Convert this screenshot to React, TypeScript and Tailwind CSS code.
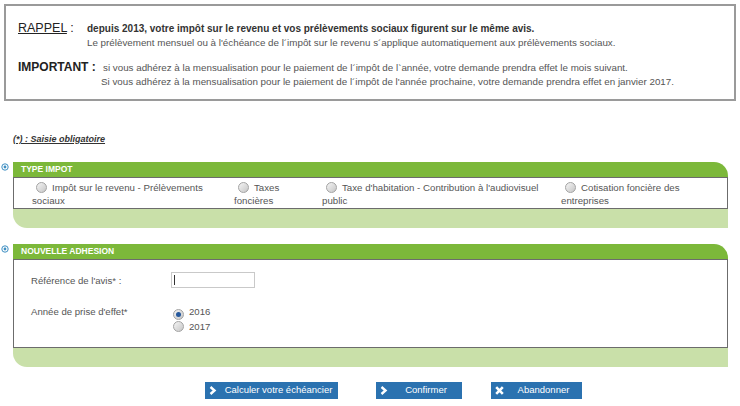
import type { ReactNode } from "react";

function Bullet() {
  return (
    <svg width="8" height="8" viewBox="0 0 8 8" className="block">
      <circle cx="4" cy="4" r="3.2" fill="#fff" stroke="#3f8fc2" strokeWidth="1" />
      <circle cx="4" cy="4" r="1.4" fill="#3f8fc2" />
    </svg>
  );
}

function Radio({ checked = false }: { checked?: boolean }) {
  return (
    <span className="inline-flex h-[11px] w-[11px] items-center justify-center rounded-full border border-[#a3a3a3] bg-linear-to-br from-[#f5f5f5] to-[#c6c6c6] align-[-2px]">
      {checked && <span className="h-[5px] w-[5px] rounded-full bg-[#25589c]" />}
    </span>
  );
}

function Panel({ title, children }: { title: string; children: ReactNode }) {
  return (
    <div className="flex">
      <div className="w-[13px] pl-[1px] pt-[1px]">
        <Bullet />
      </div>
      <div className="w-[715px]">
        <div className="h-[15px] rounded-tr-[14px] bg-[#7cb83a] pl-[8px] text-[8.5px] font-bold leading-[15px] text-white">
          {title}
        </div>
        <div className="border border-[#6c6c6c] bg-white">{children}</div>
        <div className="h-[19px] rounded-bl-[14px] bg-[#c9e0a9]" />
      </div>
    </div>
  );
}

function Chevron() {
  return (
    <svg width="8" height="9" viewBox="0 0 8 9" className="block">
      <path d="M1.5 1 L5.5 4.5 L1.5 8" fill="none" stroke="#fff" strokeWidth="2.4" strokeLinejoin="miter" />
    </svg>
  );
}

function Cross() {
  return (
    <svg width="9" height="9" viewBox="0 0 9 9" className="block">
      <path d="M1.2 1.2 L7.8 7.8 M7.8 1.2 L1.2 7.8" fill="none" stroke="#fff" strokeWidth="2.6" />
    </svg>
  );
}

function Btn({ label, icon, width }: { label: string; icon: ReactNode; width: string }) {
  return (
    <div className={`flex h-[17px] items-center bg-[#2b72b0] pl-[4px] text-[9.5px] text-white ${width}`}>
      <span className="w-[10px]">{icon}</span>
      <span className="flex-1 text-center">{label}</span>
    </div>
  );
}

const types = [
  "Impôt sur le revenu - Prélèvements sociaux",
  "Taxes foncières",
  "Taxe d'habitation - Contribution à l'audiovisuel public",
  "Cotisation foncière des entreprises",
];

export default function App() {
  return (
    <div className="h-[406px] w-[740px] overflow-hidden bg-white pt-[4px] font-['Liberation_Sans',Arial,sans-serif] text-[#555]">
      <div className="mx-[4px] h-[97px] border-2 border-[#9a9a9a] pl-[12px] pt-[15px]">
        <div className="flex items-baseline leading-[14px]">
          <span className="w-[69px] shrink-0 text-[12.5px] text-[#222]">
            <span className="underline">RAPPEL</span> :
          </span>
          <div className="text-[9.8px]">
            <p className="text-[10px] font-bold text-[#333]">
              depuis 2013, votre impôt sur le revenu et vos prélèvements sociaux figurent sur le même avis.
            </p>
            <p>
              Le prélèvement mensuel ou à l'échéance de l´impôt sur le revenu s´applique automatiquement aux
              prélèvements sociaux.
            </p>
          </div>
        </div>
        <div className="mt-[10px] flex items-baseline leading-[14px]">
          <span className="w-[85px] shrink-0 text-[12px] font-bold text-[#222]">IMPORTANT :</span>
          <div className="text-[9.8px]">
            <p>
              si vous adhérez à la mensualisation pour le paiement de l´impôt de l`année, votre demande prendra
              effet le mois suivant.
            </p>
            <p className="-ml-[2px]">
              Si vous adhérez à la mensualisation pour le paiement de l´impôt de l'année prochaine, votre demande
              prendra effet en janvier 2017.
            </p>
          </div>
        </div>
      </div>

      <p className="mt-[32px] pl-[13px] text-[9px] font-bold italic leading-[12px] text-[#333] underline">
        (*) : Saisie obligatoire
      </p>

      <div className="mt-[17px]">
        <Panel title="TYPE IMPOT">
          <div className="grid grid-cols-[202px_88px_239px_160px] pb-[1px] pl-[18px] pt-[3px] text-[9.7px] leading-[13px]">
            {types.map((t) => (
              <div key={t} className="pr-[8px]">
                <span className="ml-[4px] mr-[5px]">
                  <Radio />
                </span>
                {t}
              </div>
            ))}
          </div>
        </Panel>
      </div>

      <div className="mt-[16px]">
        <Panel title="NOUVELLE ADHESION">
          <div className="grid grid-cols-[140px_1fr] pb-[14px] pl-[17px] pt-[12px] text-[9.6px] leading-[13px]">
            <div className="self-center">Référence de l'avis* :</div>
            <div className="relative h-[16px] w-[84px] border border-[#c9c9c9] bg-white">
              <span className="absolute left-[2px] top-[2px] h-[10px] w-px bg-[#333]" />
            </div>
            <div className="mt-[17px]">Année de prise d'effet*</div>
            <div className="mt-[17px]">
              <div>
                <span className="ml-[2px] mr-[5px]">
                  <Radio checked />
                </span>
                2016
              </div>
              <div>
                <span className="ml-[2px] mr-[5px]">
                  <Radio />
                </span>
                2017
              </div>
            </div>
          </div>
        </Panel>
      </div>

      <div className="mt-[15px] flex pl-[205px]">
        <Btn label="Calculer votre échéancier" icon={<Chevron />} width="w-[133px]" />
        <div className="ml-[38px]">
          <Btn label="Confirmer" icon={<Chevron />} width="w-[86px]" />
        </div>
        <div className="ml-[29px]">
          <Btn label="Abandonner" icon={<Cross />} width="w-[91px]" />
        </div>
      </div>
    </div>
  );
}
